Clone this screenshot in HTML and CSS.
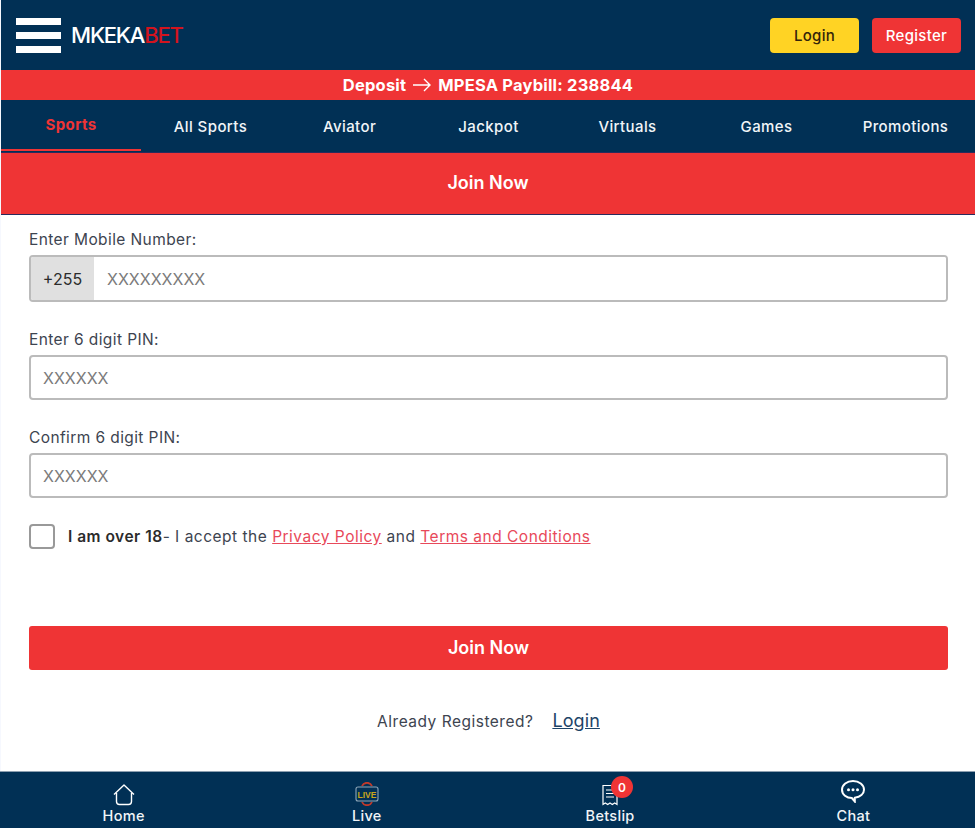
FILE: index.html
```html
<!DOCTYPE html>
<html lang="en">
<head>
    <meta charset="UTF-8">
    <meta name="viewport" content="width=device-width, initial-scale=1.0">
    <title>MkekaBet - Join Now</title>
    <link rel="stylesheet" href="styles.css">
</head>
<body>
    <div class="page">
        <header class="topbar">
            <button class="burger" type="button" aria-label="Menu">
                <span></span><span></span><span></span>
            </button>
            <a class="logo" href="#">MKEKA<span>BET</span></a>
            <div class="auth-buttons">
                <a class="btn btn-login" href="#">Login</a>
                <a class="btn btn-register" href="#">Register</a>
            </div>
        </header>

        <div class="deposit-bar">Deposit
            <svg class="arrow" width="20" height="14" viewBox="0 0 20 14" fill="none" stroke="#fff" stroke-width="1.4">
                <path d="M1 7h17M12 1l6 6-6 6"/>
            </svg>
            MPESA Paybill: 238844</div>

        <nav class="tabs">
            <a class="tab active" href="#">Sports</a>
            <a class="tab" href="#">All Sports</a>
            <a class="tab" href="#">Aviator</a>
            <a class="tab" href="#">Jackpot</a>
            <a class="tab" href="#">Virtuals</a>
            <a class="tab" href="#">Games</a>
            <a class="tab" href="#">Promotions</a>
        </nav>

        <h1 class="join-title">Join Now</h1>

        <main class="content">
            <form class="join-form">
                <label class="field-label" for="mobile">Enter Mobile Number:</label>
                <div class="mobile-input">
                    <span class="prefix">+255</span>
                    <input type="text" id="mobile" placeholder="XXXXXXXXX">
                </div>

                <label class="field-label" for="pin">Enter 6 digit PIN:</label>
                <input class="text-input" type="text" id="pin" placeholder="XXXXXX">

                <label class="field-label label-confirm" for="confirmPin">Confirm 6 digit PIN:</label>
                <input class="text-input" type="text" id="confirmPin" placeholder="XXXXXX">

                <div class="terms">
                    <input type="checkbox" id="terms">
                    <label for="terms"><strong>I am over 18</strong>- I accept the <a href="#">Privacy Policy</a> and <a href="#">Terms and Conditions</a></label>
                </div>

                <button class="submit" type="submit">Join Now</button>
            </form>

            <p class="already">Already Registered? <a href="#">Login</a></p>
        </main>

        <footer class="bottom-nav">
            <a class="bottom-item" href="#">
                <svg width="24" height="22" viewBox="0 0 24 22" fill="none" stroke="#fff" stroke-width="1.4" stroke-linejoin="round">
                    <path d="M2 10.500 12 1l10 9.500"/>
                    <path d="M4.500 9v8.500a3 3 0 0 0 3 3h9a3 3 0 0 0 3-3V9"/>
                </svg>
                Home
            </a>
            <a class="bottom-item" href="#">
                <svg width="24" height="24" viewBox="0 0 24 24" fill="none">
                    <path d="M7 4a5.500 5.500 0 0 1 10 0" stroke="#c0392b" stroke-width="1.800"/>
                    <path d="M7 20a5.500 5.500 0 0 0 10 0" stroke="#c0392b" stroke-width="1.800"/>
                    <rect x="1" y="5" width="22" height="14" rx="2" stroke="#8fa6b8" stroke-width="1.100"/>
                    <text class="live-text" x="12" y="15.500" text-anchor="middle">LIVE</text>
                </svg>
                Live
            </a>
            <a class="bottom-item" href="#">
                <span class="slip-icon">
                    <svg width="18" height="22" viewBox="0 0 18 22" fill="none" stroke="#fff" stroke-width="1.200">
                        <path d="M2 1.500h14v19l-2.300-1.500-2.400 1.500-2.300-1.500-2.300 1.500-2.400-1.500L2 20.500z"/>
                        <path d="M5 6h8M5 9.500h8M5 13h8"/>
                    </svg>
                    <span class="badge">0</span>
                </span>
                Betslip
            </a>
            <a class="bottom-item" href="#">
                <svg class="chat-icon" width="26" height="24" viewBox="0 0 26 24" fill="none">
                    <path d="M13 2C6.900 2 2 5.800 2 10.800c0 4.800 4.600 8.300 9.800 8.300l3 3.400v-3.700C20.200 18 24 14.900 24 10.800 24 5.800 19.100 2 13 2z" stroke="#fff" stroke-width="2"/>
                    <circle cx="8.500" cy="10.800" r="1.500" fill="#fff"/>
                    <circle cx="13" cy="10.800" r="1.500" fill="#fff"/>
                    <circle cx="17.500" cy="10.800" r="1.500" fill="#fff"/>
                </svg>
                Chat
            </a>
        </footer>
    </div>
</body>
</html>
```

FILE: styles.css
```css
* {
    box-sizing: border-box;
}
body {
    margin: 0;
    font-family: Inter, "Liberation Sans", sans-serif;
    background: #f6f8fe;
    color: #3d4450;
}
a {
    text-decoration: none;
}
.page {
    display: flex;
    flex-direction: column;
    height: 828px;
    padding-left: 1px;
    overflow: hidden;
}

/* top bar */
.topbar {
    display: flex;
    align-items: center;
    height: 70px;
    padding: 0 14px 0 15px;
    background: #013055;
}
.burger {
    display: flex;
    flex-direction: column;
    gap: 7px;
    width: 45px;
    padding: 0;
    border: none;
    background: none;
}
.burger span {
    display: block;
    height: 7px;
    background: #fff;
}
.logo {
    margin-left: 10px;
    font-size: 22px;
    font-weight: 500;
    letter-spacing: -1.200px;
    color: #fff;
}
.logo span {
    color: #d2141e;
}
.auth-buttons {
    display: flex;
    gap: 13px;
    margin: 1px 0 0 auto;
}
.btn {
    display: flex;
    align-items: center;
    justify-content: center;
    width: 89px;
    height: 35px;
    border-radius: 4px;
    font-size: 15px;
    letter-spacing: 0.300px;
    font-weight: 500;
}
.btn-login {
    background: #ffd324;
    color: #33240a;
}
.btn-register {
    background: #ef3435;
    color: #fff;
}

.deposit-bar {
    display: flex;
    align-items: center;
    justify-content: center;
    gap: 6px;
    height: 30px;
    padding-bottom: 1px;
    background: #ef3435;
    color: #fff;
    font-size: 16.500px;
    letter-spacing: 0.200px;
    font-weight: 700;
}
.arrow {
    flex: none;
}

/* tabs */
.tabs {
    display: flex;
    height: 53px;
    padding-left: 1px;
    background: #013055;
    border-bottom: 1px solid #2a2a5c;
}
.tab {
    flex: 1;
    display: flex;
    align-items: center;
    justify-content: center;
    color: #f1f5f8;
    font-size: 15px;
    letter-spacing: 0.400px;
    font-weight: 500;
}
.tab.active {
    flex: none;
    width: 140px;
    margin: 0 0 1px -1px;
    border-bottom: 2px solid #ef3435;
    color: #ef3435;
    font-weight: 700;
}

.join-title {
    display: flex;
    align-items: center;
    justify-content: center;
    height: 62px;
    margin: 0;
    padding-bottom: 3px;
    background: #ef3435;
    border-bottom: 1px solid #2a2a5c;
    color: #fff;
    font-size: 18px;
    font-weight: 600;
}

/* form */
.content {
    flex: 1;
    padding: 0 27px 0 28px;
    background: #fff;
}
.join-form {
    display: flex;
    flex-direction: column;
}
.field-label {
    margin: 15px 0 6px;
    font-size: 15.500px;
    letter-spacing: 0.400px;
    line-height: 18px;
    color: #3d4450;
}
.field-label:first-child {
    margin-top: 16px;
}
.label-confirm {
    margin-top: 29px;
}
.mobile-input {
    display: flex;
    height: 47px;
    margin-bottom: 14px;
    border: 2px solid #bbb;
    border-radius: 4px;
    overflow: hidden;
}
.prefix {
    display: flex;
    align-items: center;
    justify-content: center;
    width: 63px;
    background: #e0e0e0;
    color: #2c2c2c;
    font-size: 16px;
}
.mobile-input input {
    flex: 1;
    min-width: 0;
    padding: 0 13px;
    border: none;
    outline: none;
    font: inherit;
    font-size: 16px;
}
.text-input {
    height: 45px;
    padding: 0 12px;
    border: 2px solid #bbb;
    border-radius: 4px;
    font: inherit;
    font-size: 16px;
}
input::placeholder {
    color: #7b7b7b;
}
.terms {
    display: flex;
    align-items: center;
    gap: 13px;
    margin-top: 26px;
    font-size: 15.500px;
    letter-spacing: 0.500px;
}
.terms input {
    appearance: none;
    width: 26px;
    height: 25px;
    margin: 0;
    border: 2px solid #999;
    border-radius: 4px;
    background: #fff;
}
.terms strong {
    color: #2b2b2b;
    font-weight: 600;
}
.terms a {
    color: #e8495a;
    text-decoration: underline;
}
.submit {
    height: 44px;
    margin-top: 77px;
    padding-bottom: 3px;
    border: none;
    border-radius: 3px;
    background: #ef3435;
    color: #fff;
    font: inherit;
    font-size: 18px;
    font-weight: 600;
}
.already {
    display: flex;
    align-items: baseline;
    justify-content: center;
    gap: 19px;
    margin: 40px 0 0;
    font-size: 15.500px;
    letter-spacing: 0.500px;
}
.already a {
    color: #1d4468;
    font-size: 18px;
    letter-spacing: 0.100px;
    text-decoration: underline;
}

/* bottom nav */
.bottom-nav {
    display: flex;
    height: 57px;
    margin-left: -1px;
    padding-left: 2px;
    background: #013055;
    border-top: 1px solid #8d9fb0;
}
.bottom-item {
    flex: 1;
    display: flex;
    flex-direction: column;
    align-items: center;
    justify-content: flex-end;
    gap: 1px;
    padding-bottom: 4px;
    color: #f1f5f8;
    font-size: 14.500px;
    letter-spacing: 0.300px;
    font-weight: 500;
}
.chat-icon {
    margin-bottom: 3px;
}
.live-text {
    font-family: "Liberation Sans", sans-serif;
    font-size: 8.500px;
    font-weight: 700;
    letter-spacing: 0;
    fill: #c7a41c;
}
.slip-icon {
    position: relative;
    display: flex;
}
.badge {
    position: absolute;
    top: -8px;
    left: 10px;
    display: flex;
    align-items: center;
    justify-content: center;
    width: 22px;
    height: 22px;
    border-radius: 50%;
    background: #ef3435;
    color: #fff;
    font-size: 12px;
    font-weight: 600;
}
```
